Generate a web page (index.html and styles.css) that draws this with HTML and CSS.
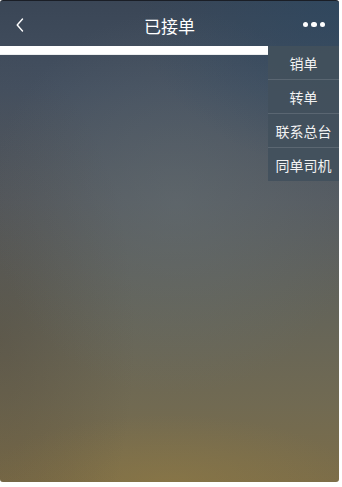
FILE: index.html
```html
<!DOCTYPE html>
<html lang="zh">
<head>
<meta charset="utf-8">
<link rel="stylesheet" href="styles.css">
</head>
<body>
<div class="screen">
  <header class="nav">
    <span class="back"><svg width="10" height="16" viewBox="0 0 10 16"><path d="M7.5 2 L2.2 8 L7.5 14" fill="none" stroke="#fff" stroke-width="1.4" stroke-linecap="round" stroke-linejoin="round"/></svg></span>
    <h1 class="title">已接单</h1>
    <span class="more"><i></i><i></i><i></i></span>
  </header>
  <div class="body">
    <div class="bar"></div>
    <ul class="menu">
      <li>销单</li>
      <li>转单</li>
      <li>联系总台</li>
      <li>同单司机</li>
    </ul>
  </div>
</div>
</body>
</html>
```
FILE: styles.css
```css
html, body { margin: 0; padding: 0; background: #fff; }
body { width: 342px; height: 487px; overflow: hidden; font-family: "Noto Sans CJK SC", "Noto Sans", sans-serif; }
.screen {
  width: 339px;
  height: 482px;
  border-radius: 3px 3px 3px 3px;
  border-top: 1px solid #1a1e26;
  box-sizing: border-box;
  background:
    radial-gradient(ellipse 60% 35% at 100% 0%, rgba(40, 72, 100, 0.55), rgba(40, 72, 100, 0) 100%),
    radial-gradient(ellipse 55% 40% at 52% 42%, rgba(105, 115, 118, 0.4), rgba(105, 115, 118, 0) 100%),
    radial-gradient(ellipse 40% 60% at 0% 70%, rgba(70, 60, 50, 0.3), rgba(70, 60, 50, 0) 100%),
    radial-gradient(ellipse 55% 14% at 50% 100%, rgba(150, 128, 70, 0.4), rgba(150, 128, 70, 0) 100%),
    linear-gradient(180deg, #3a4656 0%, #445060 18%, #565c62 42%, #646459 64%, #716a52 84%, #7c6d48 100%);
  display: flex;
  flex-direction: column;
}
.nav {
  height: 45px;
  display: flex;
  align-items: center;
  justify-content: space-between;
  padding: 2px 14px 0 15px;
  box-sizing: border-box;
  position: relative;
}
.back { display: flex; width: 10px; height: 16px; }
.title {
  position: absolute; left: 0; right: 0; top: 0; bottom: 0;
  margin: 0; padding-top: 3px; display: flex; align-items: center; justify-content: center;
  font-size: 17px; font-weight: 400; color: #fff;
  pointer-events: none;
}
.more { display: flex; gap: 3px; }
.more i { width: 5.5px; height: 5.5px; border-radius: 50%; background: #fff; display: block; }
.body { position: relative; flex: 1; }
.bar { width: 268px; height: 8px; background: #fff; border-bottom: 1px solid rgba(200, 205, 210, 0.35); }
.menu {
  position: absolute; top: 0; right: 0;
  width: 71px; margin: 0; padding: 0; list-style: none;
  background: rgba(66, 80, 92, 0.92);
}
.menu li {
  height: 34px; display: flex; align-items: center; justify-content: center;
  color: #f2f2f2; font-size: 14px;
  border-top: 1px solid rgba(255,255,255,0.13);
  box-sizing: border-box;
}
.menu li:first-child { border-top: 0; height: 33px; }
```
